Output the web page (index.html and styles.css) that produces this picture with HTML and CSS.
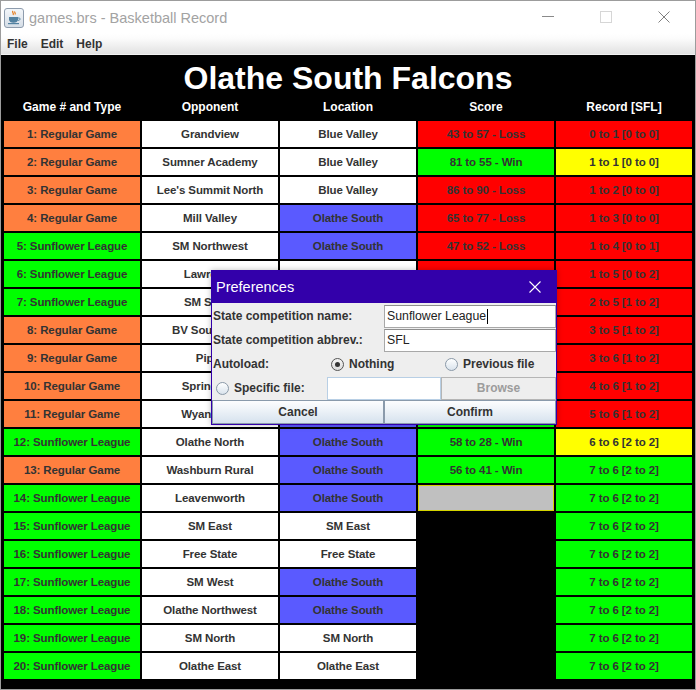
FILE: index.html
```html
<!DOCTYPE html>
<html>
<head>
<meta charset="utf-8">
<title>games.brs - Basketball Record</title>
<link rel="stylesheet" href="styles.css">
</head>
<body>
<div class="window">
  <div class="titlebar">
    <svg class="appicon" width="20" height="20" viewBox="0 0 20 20">
      <defs>
        <linearGradient id="ig" x1="0" y1="0" x2="0" y2="1">
          <stop offset="0" stop-color="#f4f7fa"/>
          <stop offset="1" stop-color="#d5dde6"/>
        </linearGradient>
      </defs>
      <rect x="0.5" y="0.5" width="19" height="19" rx="2.5" fill="url(#ig)" stroke="#8e9cad"/>
      <path d="M9 3c-1.5 1.5 1.5 2.2 0 4M11 3.5c-1 1 1 1.6 0 3" fill="none" stroke="#e76f00" stroke-width="1.1"/>
      <path d="M5 9h9v2.5c0 2-2 3.3-4.5 3.3S5 13.5 5 11.5z" fill="#5382a1"/>
      <path d="M14 10h1.2c1.2 0 1.2 2-0.3 2.3H13.6" fill="none" stroke="#5382a1" stroke-width="1"/>
      <path d="M4 15.6h11" stroke="#5382a1" stroke-width="1.2"/>
    </svg>
    <span class="wintitle">games.brs - Basketball Record</span>
    <div class="controls">
      <div class="ctl"><span class="min"></span></div>
      <div class="ctl"><span class="max"></span></div>
      <div class="ctl">
        <svg width="12" height="12" viewBox="0 0 12 12"><path d="M0.5 0.5L11.5 11.5M11.5 0.5L0.5 11.5" stroke="#808080" stroke-width="1"/></svg>
      </div>
    </div>
  </div>
  <div class="menubar">
    <span class="menu">File</span>
    <span class="menu">Edit</span>
    <span class="menu">Help</span>
  </div>
  <div class="content">
    <div class="teamtitle">Olathe South Falcons</div>
    <div class="grid">
      <div class="hd">Game # and Type</div>
      <div class="hd">Opponent</div>
      <div class="hd">Location</div>
      <div class="hd">Score</div>
      <div class="hd">Record [SFL]</div>

      <div class="c or">1: Regular Game</div><div class="c wh">Grandview</div><div class="c wh">Blue Valley</div><div class="c rd">43 to 57 - Loss</div><div class="c rd">0 to 1 [0 to 0]</div>
      <div class="c or">2: Regular Game</div><div class="c wh">Sumner Academy</div><div class="c wh">Blue Valley</div><div class="c gr">81 to 55 - Win</div><div class="c ye">1 to 1 [0 to 0]</div>
      <div class="c or">3: Regular Game</div><div class="c wh">Lee's Summit North</div><div class="c wh">Blue Valley</div><div class="c rd">86 to 90 - Loss</div><div class="c rd">1 to 2 [0 to 0]</div>
      <div class="c or">4: Regular Game</div><div class="c wh">Mill Valley</div><div class="c bl">Olathe South</div><div class="c rd">65 to 77 - Loss</div><div class="c rd">1 to 3 [0 to 0]</div>
      <div class="c gr">5: Sunflower League</div><div class="c wh">SM Northwest</div><div class="c bl">Olathe South</div><div class="c rd">47 to 52 - Loss</div><div class="c rd">1 to 4 [0 to 1]</div>
      <div class="c gr">6: Sunflower League</div><div class="c wh">Lawrence</div><div class="c wh"></div><div class="c rd"></div><div class="c rd">1 to 5 [0 to 2]</div>
      <div class="c gr">7: Sunflower League</div><div class="c wh">SM South</div><div class="c bl"></div><div class="c gr"></div><div class="c rd">2 to 5 [1 to 2]</div>
      <div class="c or">8: Regular Game</div><div class="c wh">BV Southwest</div><div class="c wh"></div><div class="c gr"></div><div class="c rd">3 to 5 [1 to 2]</div>
      <div class="c or">9: Regular Game</div><div class="c wh">Piper</div><div class="c wh"></div><div class="c rd"></div><div class="c rd">3 to 6 [1 to 2]</div>
      <div class="c or">10: Regular Game</div><div class="c wh">Spring Hill</div><div class="c bl"></div><div class="c gr"></div><div class="c rd">4 to 6 [1 to 2]</div>
      <div class="c or">11: Regular Game</div><div class="c wh">Wyandotte</div><div class="c bl"></div><div class="c gr"></div><div class="c rd">5 to 6 [1 to 2]</div>
      <div class="c gr">12: Sunflower League</div><div class="c wh">Olathe North</div><div class="c bl">Olathe South</div><div class="c gr">58 to 28 - Win</div><div class="c ye">6 to 6 [2 to 2]</div>
      <div class="c or">13: Regular Game</div><div class="c wh">Washburn Rural</div><div class="c bl">Olathe South</div><div class="c gr">56 to 41 - Win</div><div class="c gr">7 to 6 [2 to 2]</div>
      <div class="c gr">14: Sunflower League</div><div class="c wh">Leavenworth</div><div class="c bl">Olathe South</div><div class="c gy"></div><div class="c gr">7 to 6 [2 to 2]</div>
      <div class="c gr">15: Sunflower League</div><div class="c wh">SM East</div><div class="c wh">SM East</div><div class="c bk"></div><div class="c gr">7 to 6 [2 to 2]</div>
      <div class="c gr">16: Sunflower League</div><div class="c wh">Free State</div><div class="c wh">Free State</div><div class="c bk"></div><div class="c gr">7 to 6 [2 to 2]</div>
      <div class="c gr">17: Sunflower League</div><div class="c wh">SM West</div><div class="c bl">Olathe South</div><div class="c bk"></div><div class="c gr">7 to 6 [2 to 2]</div>
      <div class="c gr">18: Sunflower League</div><div class="c wh">Olathe Northwest</div><div class="c bl">Olathe South</div><div class="c bk"></div><div class="c gr">7 to 6 [2 to 2]</div>
      <div class="c gr">19: Sunflower League</div><div class="c wh">SM North</div><div class="c wh">SM North</div><div class="c bk"></div><div class="c gr">7 to 6 [2 to 2]</div>
      <div class="c gr">20: Sunflower League</div><div class="c wh">Olathe East</div><div class="c wh">Olathe East</div><div class="c bk"></div><div class="c gr">7 to 6 [2 to 2]</div>
    </div>
  </div>

  <div class="dialog">
    <div class="dtitle">
      <span class="dtext">Preferences</span>
      <svg class="dclose" width="12" height="12" viewBox="0 0 12 12"><path d="M0.5 0.5L11.5 11.5M11.5 0.5L0.5 11.5" stroke="#ffffff" stroke-width="1.1"/></svg>
    </div>
    <div class="dbody">
      <div class="drow two first">
        <span class="lbl">State competition name:</span>
        <div class="field"><span>Sunflower League</span><span class="caret"></span></div>
      </div>
      <div class="drow two">
        <span class="lbl">State competition abbrev.:</span>
        <div class="field"><span>SFL</span></div>
      </div>
      <div class="drow three">
        <span class="lbl">Autoload:</span>
        <span class="radio-wrap"><span class="radio on"></span><span class="lbl">Nothing</span></span>
        <span class="radio-wrap"><span class="radio"></span><span class="lbl">Previous file</span></span>
      </div>
      <div class="drow three">
        <span class="radio-wrap"><span class="radio"></span><span class="lbl">Specific file:</span></span>
        <div class="field light"></div>
        <div class="btn disabled">Browse</div>
      </div>
      <div class="drow two">
        <div class="btn">Cancel</div>
        <div class="btn">Confirm</div>
      </div>
    </div>
  </div>
</div>
</body>
</html>
```

FILE: styles.css
```css
html, body {
  margin: 0;
  padding: 0;
  background: #ffffff;
}

.window {
  position: relative;
  width: 696px;
  height: 690px;
  box-sizing: border-box;
  border: 1px solid #9c9c9c;
  background: #ffffff;
  overflow: hidden;
  font-family: "Liberation Sans", Arial, sans-serif;
}

.titlebar {
  height: 32px;
  display: flex;
  align-items: center;
  background: #ffffff;
}

.appicon {
  margin-left: 3px;
  margin-top: 1px;
  flex: none;
}

.wintitle {
  margin-left: 5px;
  font-size: 14.5px;
  color: #a3a3a3;
  padding-top: 1px;
}

.controls {
  margin-left: auto;
  margin-right: 2px;
  display: flex;
  height: 32px;
}

.ctl {
  width: 58px;
  height: 32px;
  display: flex;
  align-items: center;
  justify-content: center;
}

.min {
  display: block;
  width: 12px;
  height: 1px;
  background: #8a8a8a;
  margin-top: -1px;
}

.max {
  display: block;
  width: 10px;
  height: 10px;
  border: 1px solid #d6d6d6;
  margin-top: -1px;
}

.menubar {
  height: 21px;
  border-bottom: 1px solid #f2f2f2;
  background: linear-gradient(#ffffff 0%, #fcfcfc 25%, #ececec 70%, #e2e2e2 100%);
  display: flex;
  align-items: center;
  padding-left: 6px;
  gap: 13px;
}

.menu {
  font-size: 12px;
  font-weight: bold;
  color: #333333;
  padding-top: 1px;
}

.content {
  background: #000000;
  height: 634px;
  box-sizing: border-box;
  padding: 6px 3px 0 3px;
}

.teamtitle {
  height: 34px;
  line-height: 35px;
  text-align: center;
  color: #ffffff;
  font-size: 32px;
  font-weight: bold;
}

.grid {
  display: grid;
  grid-template-columns: repeat(5, 136px);
  grid-template-rows: 24px repeat(20, 26px);
  column-gap: 2px;
  row-gap: 2px;
}

.hd {
  color: #ffffff;
  font-size: 12px;
  font-weight: bold;
  text-align: center;
  line-height: 25px;
}

.c {
  box-sizing: border-box;
  font-size: 11.5px;
  letter-spacing: -0.1px;
  font-weight: bold;
  color: #333333;
  text-align: center;
  line-height: 26px;
  white-space: nowrap;
  overflow: hidden;
}

.or { background: #ff7f3f; }
.gr { background: #00ff00; }
.rd { background: #ff0000; }
.ye { background: #ffff00; }
.bl { background: #5a5aff; }
.wh { background: #ffffff; }
.gy { background: #c0c0c0; border: 1px solid #d4d400; }
.bk { background: #000000; }

/* Preferences dialog */
.dialog {
  position: absolute;
  left: 210px;
  top: 269px;
  width: 346px;
  height: 155px;
  box-sizing: border-box;
  border: 1px solid #3300aa;
  background: #eeeeee;
  box-shadow: 0 0 6px rgba(0, 0, 0, 0.25);
}

.dtitle {
  height: 32px;
  background: #3300aa;
  display: flex;
  align-items: center;
  padding-left: 4px;
}

.dtext {
  color: #ffffff;
  font-size: 14.5px;
  padding-bottom: 1px;
}

.dclose {
  margin-left: auto;
  margin-right: 15px;
}

.dbody {
  display: flex;
  flex-direction: column;
}

.drow {
  display: grid;
  height: 24px;
  align-items: center;
}

.drow.first {
  height: 25px;
}

.drow.two {
  grid-template-columns: 172px 172px;
}

.drow.three {
  grid-template-columns: 115px 114px 115px;
}

.lbl {
  font-size: 12px;
  font-weight: bold;
  color: #333333;
  padding-left: 1px;
  white-space: nowrap;
}

.field {
  box-sizing: border-box;
  height: 23px;
  background: #ffffff;
  border: 1px solid #a8a8a8;
  border-top-color: #8e8e8e;
  display: flex;
  align-items: center;
  padding-left: 2px;
  font-size: 12.3px;
  color: #222222;
}

.drow.first .field {
  margin-top: 1px;
}

.field.light {
  border: 1px solid #b8cfe5;
}

.caret {
  display: inline-block;
  width: 1px;
  height: 15px;
  background: #000000;
  margin-left: 1px;
}

.radio-wrap {
  display: flex;
  align-items: center;
  padding-left: 4px;
  gap: 5px;
}

.radio-wrap .lbl {
  padding-left: 0;
}

.radio {
  box-sizing: border-box;
  width: 13px;
  height: 13px;
  border-radius: 50%;
  border: 1px solid #8a99a8;
  background: linear-gradient(#ffffff, #d9e3ec);
  position: relative;
}

.radio.on {
  border-color: #555555;
  background: linear-gradient(#f4f4f4, #dcdcdc);
}

.radio.on::after {
  content: "";
  position: absolute;
  left: 3px;
  top: 3px;
  width: 5px;
  height: 5px;
  border-radius: 50%;
  background: #333333;
}

.btn {
  box-sizing: border-box;
  height: 24px;
  border: 1px solid #8a9aab;
  background: linear-gradient(#fdfdfe 0%, #eef3f8 40%, #d6e2ee 100%);
  font-size: 12px;
  font-weight: bold;
  color: #333333;
  display: flex;
  align-items: center;
  justify-content: center;
}

.btn.disabled {
  background: #eeeeee;
  border: 1px solid #b5b5b5;
  color: #9c9c9c;
  height: 23px;
}
```
